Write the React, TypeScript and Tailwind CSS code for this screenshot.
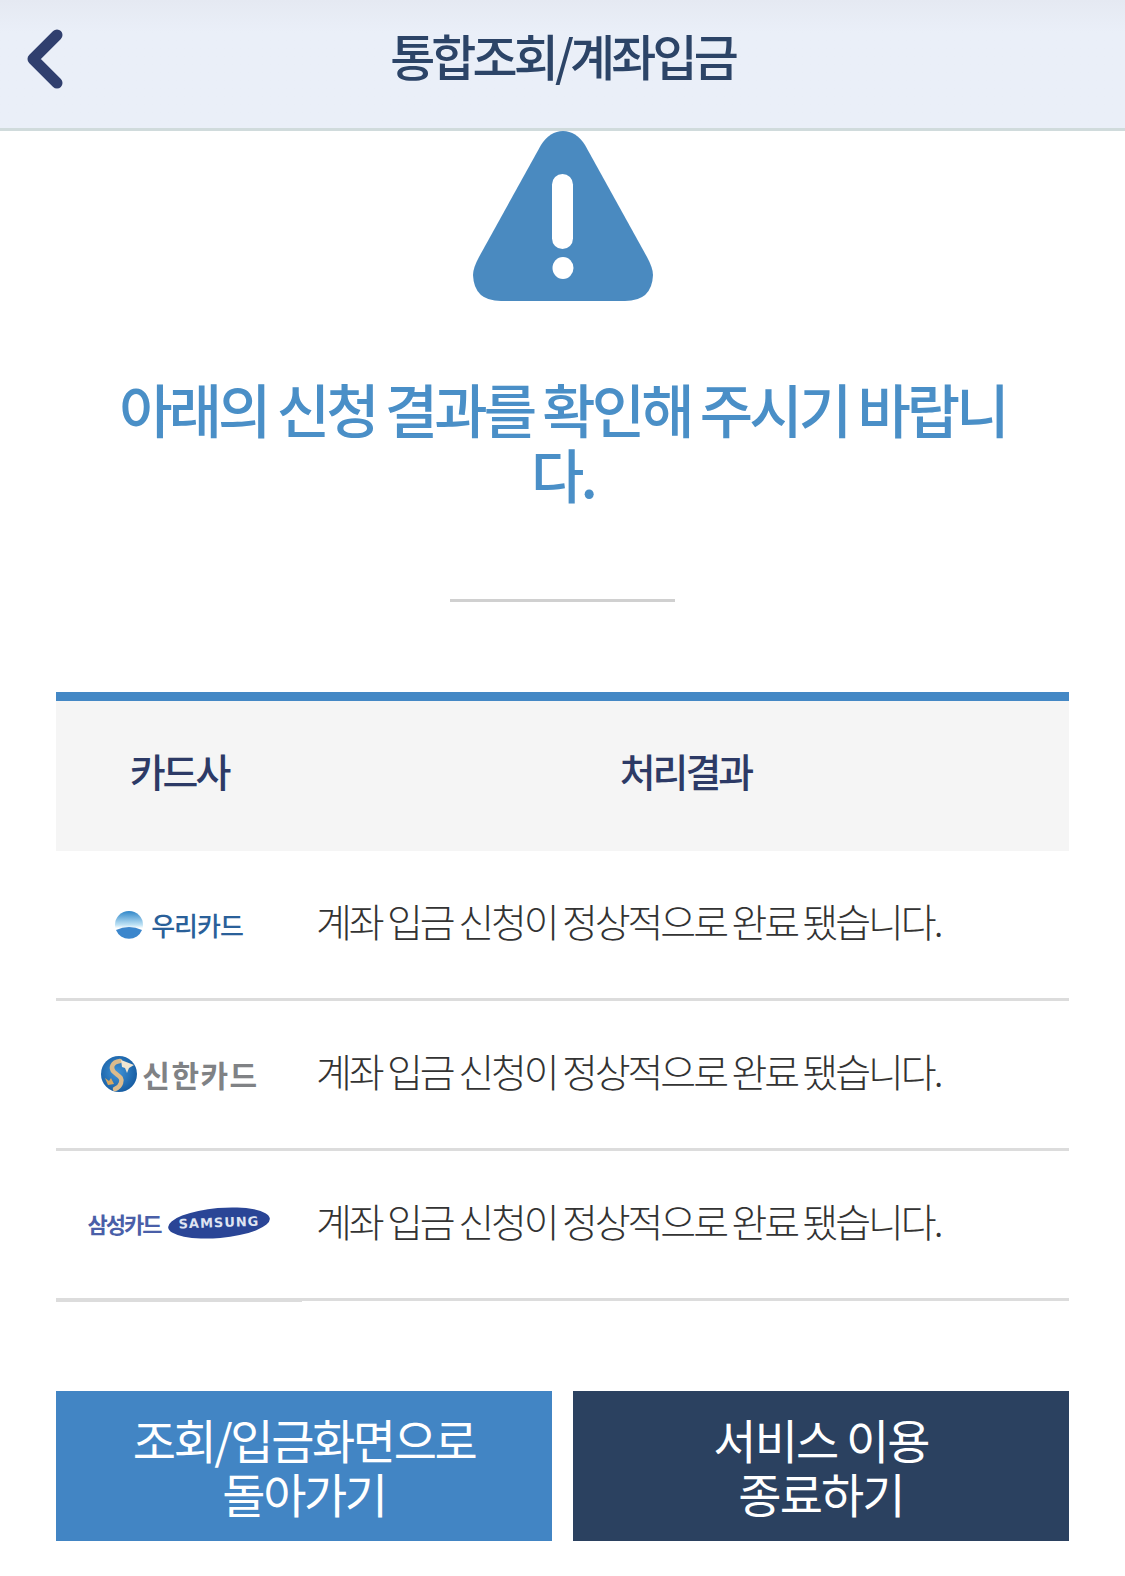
import React from 'react';

const KR = "font-['Noto_Sans_CJK_KR','Noto_Sans',sans-serif]";

const WooriLogo = () => (
    <div className="flex items-center gap-[8px] mt-[3px]">
        <svg width="28" height="28" viewBox="0 0 28 28">
            <defs>
                <linearGradient id="woori" x1="0" y1="0" x2="0" y2="1">
                    <stop offset="0" stopColor="#2f86c9" />
                    <stop offset="0.5" stopColor="#bfe3f5" />
                    <stop offset="0.62" stopColor="#ffffff" />
                </linearGradient>
            </defs>
            <circle cx="14" cy="14" r="14" fill="url(#woori)" />
            <path d="M1 19 Q14 13 27 19 A14 14 0 0 1 1 19Z" fill="#3b86cc" />
        </svg>
        <span className="text-[26px] leading-none font-medium tracking-[-1px] text-[#2a6099]">우리카드</span>
    </div>
);

const ShinhanLogo = () => (
    <div className="flex items-center gap-[5px] ml-[2px]">
        <svg width="36" height="36" viewBox="0 0 36 36">
            <defs>
                <radialGradient id="shinhan" cx="0.45" cy="0.45" r="0.6">
                    <stop offset="0" stopColor="#3f93d8" />
                    <stop offset="1" stopColor="#155a9f" />
                </radialGradient>
            </defs>
            <circle cx="18" cy="18" r="18" fill="url(#shinhan)" />
            <path d="M19 5 C11 6 9 12 13 16 C17 20 22 21 20 27 C19 30 17 32 14 33" fill="none" stroke="#dcbb8c" strokeWidth="4.5" strokeLinecap="round" />
            <path d="M20 4 L33 9 L28 12 L26 17 L24 12 L21 11Z" fill="#f1e6d2" />
            <path d="M4 22 L8 25 L10 22 L13 28 L7 29Z" fill="#d9a860" />
        </svg>
        <span className="text-[30px] leading-none font-bold tracking-[1.5px] text-[#808285]">신한카드</span>
    </div>
);

const SamsungLogo = () => (
    <div className="flex items-center gap-[8px] mb-[2px]">
        <span className="text-[22px] leading-none font-bold tracking-[-2px] text-[#4a5fa8]">삼성카드</span>
        <svg width="102" height="36" viewBox="0 0 102 36">
            <ellipse cx="51" cy="18" rx="51" ry="15" transform="rotate(-5 51 18)" fill="#2a4596" />
            <text x="51" y="22" textAnchor="middle" transform="rotate(-2 51 18)" fill="#dfe4f2" fontSize="13" fontWeight="700" letterSpacing="1" fontFamily="'DejaVu Sans', sans-serif">SAMSUNG</text>
        </svg>
    </div>
);

const rows = [
    { key: 'woori', logo: <WooriLogo />, result: '계좌 입금 신청이 정상적으로 완료 됐습니다.' },
    { key: 'shinhan', logo: <ShinhanLogo />, result: '계좌 입금 신청이 정상적으로 완료 됐습니다.' },
    { key: 'samsung', logo: <SamsungLogo />, result: '계좌 입금 신청이 정상적으로 완료 됐습니다.' },
];

export default function App() {
    return (
        <div className={`w-[1125px] h-[1576px] bg-white overflow-hidden ${KR}`}>
            <header className="relative h-[131px] bg-linear-to-b from-[#e5e9f2] to-[#eaeff8] to-[25%] border-b-[3px] border-[#d0dbdc] flex items-center justify-center">
                <svg className="absolute left-[24px] top-[26px]" width="42" height="66" viewBox="0 0 42 66">
                    <path d="M33 9 L9 33 L33 57" fill="none" stroke="#303f6e" strokeWidth="11" strokeLinecap="round" strokeLinejoin="round" />
                </svg>
                <h1 className="mt-[-20px] text-[49px] leading-none font-medium tracking-[-3.9px] text-[#2c4467]">통합조회/계좌입금</h1>
            </header>

            <main className="px-[56px]">
                <div className="flex justify-center">
                    <svg width="180" height="170" viewBox="0 0 180 170">
                        <path d="M68 14 Q77 0 90 0 Q103 0 112 14 L174 126 Q180 137 180 144 Q179 170 152 170 L28 170 Q1 170 0 144 Q0 137 6 126Z" fill="#4a8ac0" />
                        <rect x="79" y="43" width="21" height="75" rx="10.5" fill="#ffffff" />
                        <ellipse cx="90" cy="137" rx="10.5" ry="11" fill="#ffffff" />
                    </svg>
                </div>

                <p className="mt-[75px] px-[60px] text-center text-[58px] leading-[65px] font-medium tracking-[-3.9px] text-[#4a8fc7]">아래의 신청 결과를 확인해 주시기 바랍니다.</p>

                <div className="mt-[93px] mx-auto w-[225px] h-[3px] bg-[#d0d0d0]" />

                <section className="mt-[90px] border-t-[9px] border-[#4488c5]">
                    <div className="h-[150px] pb-[12px] bg-[#f5f5f5] flex items-center text-[39px] font-medium tracking-[-3px] text-[#2d3a66]">
                        <div className="w-[246px] text-center">카드사</div>
                        <div className="flex-1 text-center">처리결과</div>
                    </div>
                    {rows.map((row, i) => (
                        <div key={row.key} className="relative h-[150px] border-b-[3px] border-[#dcdcdc] flex items-center">
                            <div className="w-[246px] pb-[2px] flex justify-center">{row.logo}</div>
                            <div className="flex-1 pl-[14px] pb-[9px] text-[39px] tracking-[-3.1px] text-[#333333] font-light">{row.result}</div>
                            {i === rows.length - 1 && <div className="absolute left-0 bottom-[-4px] w-[246px] h-[1px] bg-[#dcdcdc]" />}
                        </div>
                    ))}
                </section>

                <div className="mt-[90px] grid grid-cols-2 gap-[21px]">
                    <button className="h-[150px] bg-[#4285c4] text-white text-[47px] leading-[54px] font-normal tracking-[-2.4px]">조회/입금화면으로<br />돌아가기</button>
                    <button className="h-[150px] bg-[#2b4160] text-white text-[47px] leading-[54px] font-normal tracking-[-1.9px]">서비스 이용<br />종료하기</button>
                </div>
            </main>
        </div>
    );
}
